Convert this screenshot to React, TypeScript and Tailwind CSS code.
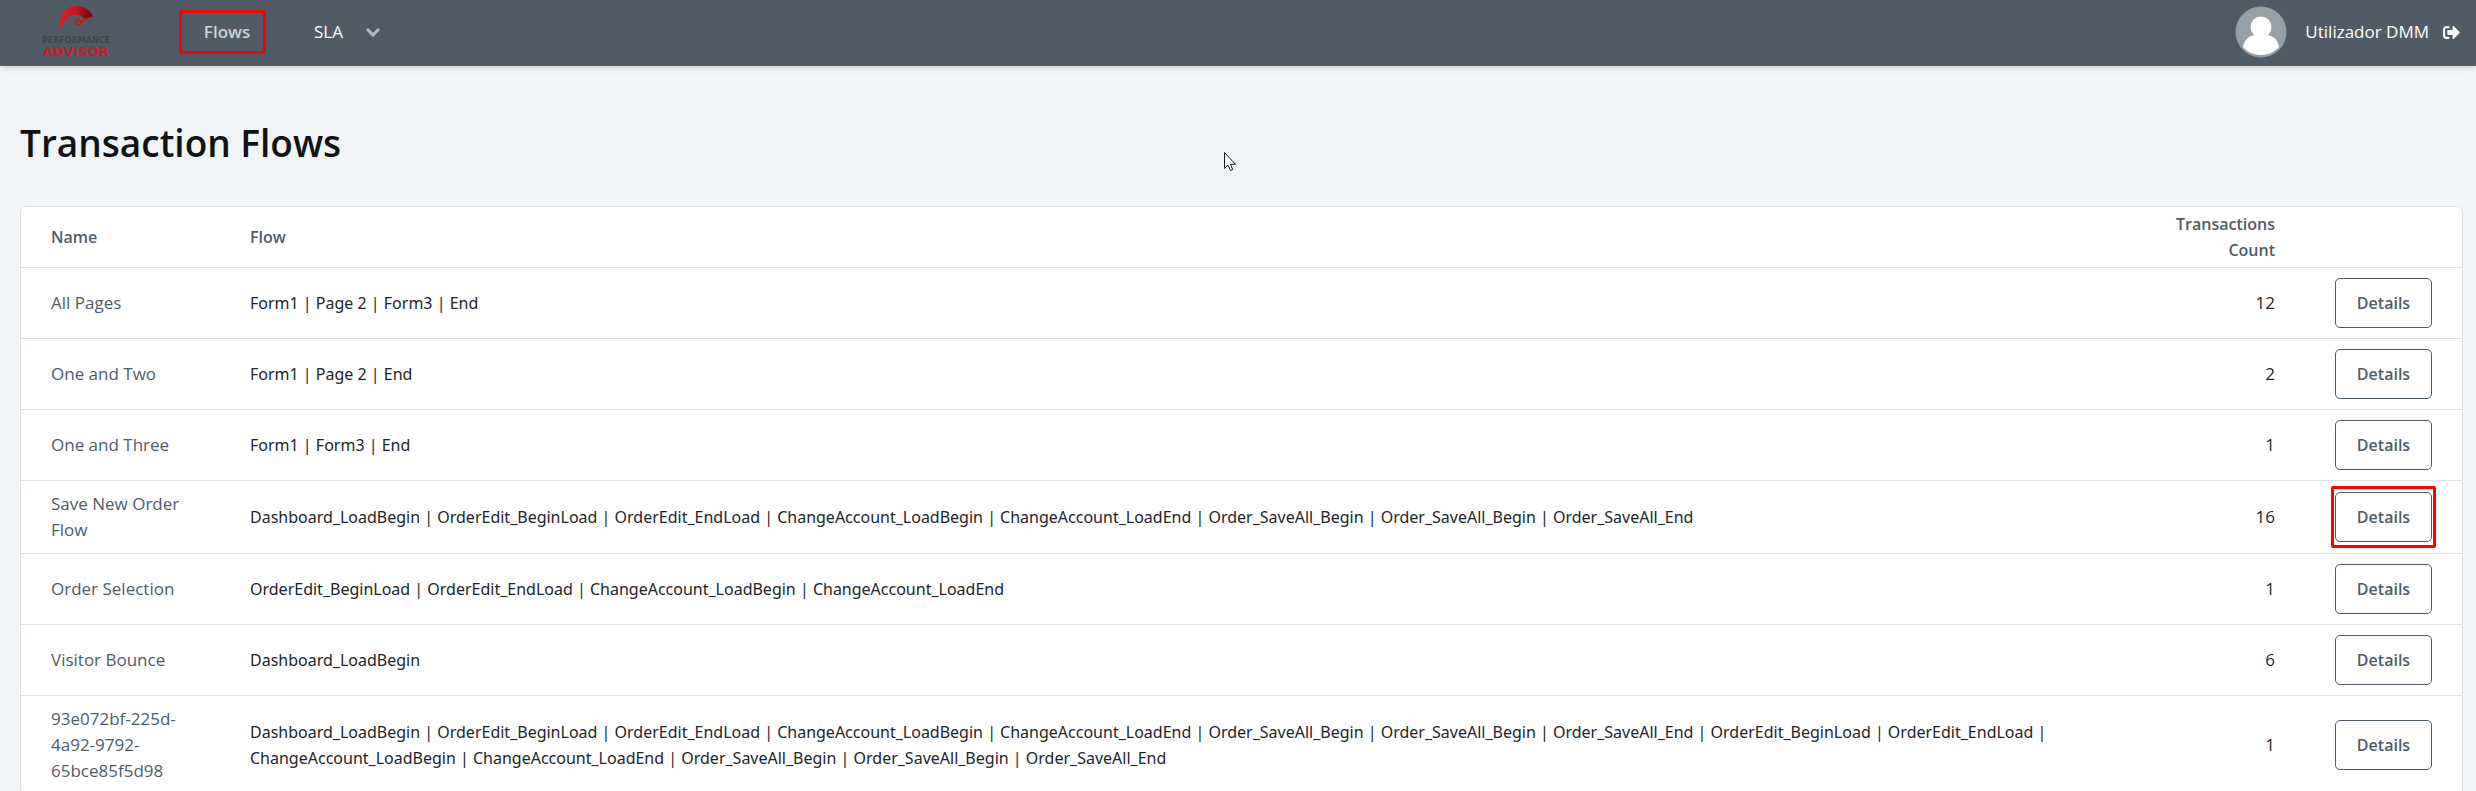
import { FaSignOutAlt } from "react-icons/fa";

type Flow = {
  name: string;
  steps: string[];
  count: number;
  highlighted?: boolean;
};

const ORDER_STEPS = [
  "Dashboard_LoadBegin",
  "OrderEdit_BeginLoad",
  "OrderEdit_EndLoad",
  "ChangeAccount_LoadBegin",
  "ChangeAccount_LoadEnd",
  "Order_SaveAll_Begin",
  "Order_SaveAll_Begin",
  "Order_SaveAll_End",
];

const FLOWS: Flow[] = [
  { name: "All Pages", steps: ["Form1", "Page 2", "Form3", "End"], count: 12 },
  { name: "One and Two", steps: ["Form1", "Page 2", "End"], count: 2 },
  { name: "One and Three", steps: ["Form1", "Form3", "End"], count: 1 },
  { name: "Save New Order Flow", steps: ORDER_STEPS, count: 16, highlighted: true },
  { name: "Order Selection", steps: ORDER_STEPS.slice(1, 5), count: 1 },
  { name: "Visitor Bounce", steps: ["Dashboard_LoadBegin"], count: 6 },
  {
    name: "93e072bf-225d-4a92-9792-65bce85f5d98",
    steps: [...ORDER_STEPS, ...ORDER_STEPS.slice(1)],
    count: 1,
  },
];

function Logo() {
  return (
    <a href="#" className="flex w-[68px] flex-col items-center font-['DejaVu_Sans'] font-bold">
      <svg viewBox="0 0 34 29" className="h-[29px] w-[34px]" aria-hidden="true">
        <defs>
          <linearGradient id="gauge" x1="0" y1="0" x2="1" y2="0">
            <stop offset="0" stopColor="#d8202a" />
            <stop offset="0.5" stopColor="#c4161f" />
            <stop offset="1" stopColor="#6e0508" />
          </linearGradient>
        </defs>
        <path d="M3 28.500C-2.500 15 3 1 17 1c8.500 0 15 5 17 10.500L25 14c-3-4-7.500-5-12-3.500C6 13 2.500 19 3 28.500z" fill="url(#gauge)" />
        <path d="M33 12.500L21 16v3z" fill="#c4161f" />
        <circle cx="19" cy="17.500" r="2.500" fill="none" stroke="#c4161f" strokeWidth="1.500" />
      </svg>
      <span className="mt-[3px] text-[8px] leading-[8px] text-[#3c444a]">PERFORMANCE</span>
      <span className="text-[13px] leading-[14px] text-[#c4202b]">ADVISOR</span>
    </a>
  );
}

function Header() {
  return (
    <header className="flex h-[66px] items-center bg-[#4f5c67] pr-[16px] pb-[2px] pl-[42px] text-[17px] leading-[26px] text-white shadow-md">
      <Logo />
      <nav className="ml-[69px] flex items-center">
        <a href="#" className="flex h-[44px] w-[87px] items-center justify-center rounded-xs border-3 border-[#ff0000] pl-[9px] font-semibold text-[#ced3d8]">
          Flows
        </a>
        <button type="button" className="ml-[48px] flex items-center gap-[22px]">
          SLA
          <svg viewBox="0 0 16 10" className="h-[10px] w-[16px]" aria-hidden="true">
            <path d="M2 2l6 6 6-6" fill="none" stroke="#b4bbc1" strokeWidth="3" />
          </svg>
        </button>
      </nav>
      <div className="ml-auto flex items-center">
        <svg viewBox="0 0 52 52" className="h-[52px] w-[52px]" aria-hidden="true">
          <circle cx="26" cy="26" r="25.500" fill="#969ea6" />
          <circle cx="26" cy="21" r="10.500" fill="#fff" />
          <path d="M8 41c1-8 7-12 13-12h10c6 0 12 4 13 12-4 5-11 8-18 8S12 46 8 41z" fill="#fff" />
        </svg>
        <span className="ml-[18px]">Utilizador DMM</span>
        <button type="button" aria-label="Sair" className="ml-[14px]">
          <FaSignOutAlt className="size-[17px]" />
        </button>
      </div>
    </header>
  );
}

function FlowRow({ flow }: { flow: Flow }) {
  return (
    <tr className="border-t border-[#dee2e6]">
      <td className="py-[10px] pr-[30px] pl-[30px] text-[#4f5c67]">{flow.name}</td>
      <td className="px-[10px] py-[10px] font-['Noto_Sans',sans-serif] text-[16px]">{flow.steps.join(" | ")}</td>
      <td className="py-[10px] pr-[30px] text-right">{flow.count}</td>
      <td className="py-[10px] pl-[30px]">
        <div className="relative w-[97px]">
          <button
            type="button"
            className="block h-[50px] w-full rounded-[5px] border border-[#4f5c67] text-[16px] font-semibold text-[#4f5c67]"
          >
            Details
          </button>
          {flow.highlighted && (
            <span className="pointer-events-none absolute -inset-x-1 -inset-y-[6px] rounded-xs border-3 border-[#ff0000]" />
          )}
        </div>
      </td>
    </tr>
  );
}

export default function App() {
  return (
    <div className="relative min-h-screen bg-[#f1f5f8] font-['Open_Sans','Noto_Sans',sans-serif] text-[#212529]">
      <Header />
      <main className="pt-[50px] pr-[13px] pl-[20px]">
        <h1 className="text-[37px] leading-[54px] font-semibold text-[#101213]">Transaction Flows</h1>
        <div className="mt-[36px] rounded-md border border-[#dee2e6] bg-white">
          <table className="w-full table-fixed text-left text-[17px] leading-[26px]">
            <colgroup>
              <col className="w-[219px]" />
              <col />
              <col className="w-[150px]" />
              <col className="w-[157px]" />
            </colgroup>
            <thead className="text-[16px] text-[#4f5c67]">
              <tr>
                <th className="py-1 pl-[30px] font-semibold">Name</th>
                <th className="py-1 pl-[10px] font-semibold">Flow</th>
                <th className="py-1 pr-[30px] text-right font-semibold">Transactions Count</th>
                <td></td>
              </tr>
            </thead>
            <tbody>
              {FLOWS.map((flow) => (
                <FlowRow key={flow.name} flow={flow} />
              ))}
            </tbody>
          </table>
        </div>
      </main>
      <svg viewBox="0 0 12 19" className="absolute top-[152px] left-[1224px] h-[19px] w-[12px]" aria-hidden="true">
        <path d="M.5.500v16l3.500-3.300 2.500 5.300 2.300-1-2.400-5.200h5z" fill="#fff" stroke="#15171f" />
      </svg>
    </div>
  );
}
